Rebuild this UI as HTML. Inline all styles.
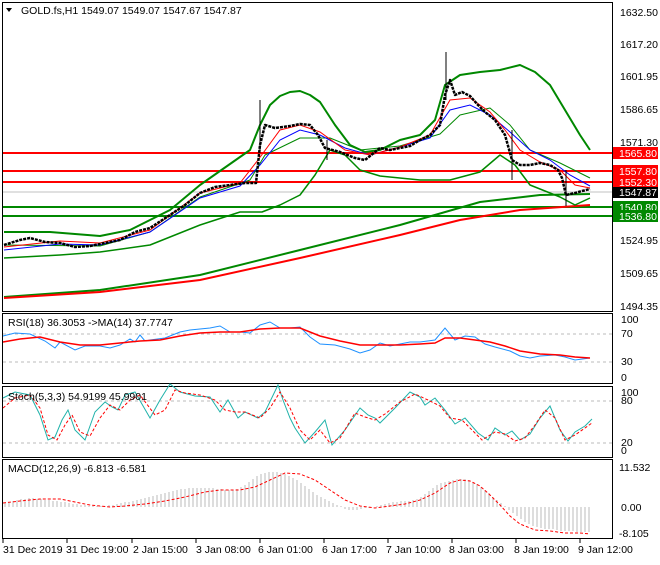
<!DOCTYPE html>
<html><head><meta charset="utf-8"><style>
body{margin:0;background:#fff;width:660px;height:560px;overflow:hidden;font-family:"Liberation Sans",sans-serif}
svg text{font-family:"Liberation Sans",sans-serif;font-size:10.5px;fill:#000}
</style></head><body>
<svg width="660" height="560" xmlns="http://www.w3.org/2000/svg">
<rect width="660" height="560" fill="#fff"/>
<g fill="none" stroke="#000" stroke-width="1">
<rect x="2.5" y="2.5" width="610" height="309"/>
<rect x="2.5" y="313.5" width="610" height="70"/>
<rect x="2.5" y="386.5" width="610" height="71"/>
<rect x="2.5" y="459.5" width="610" height="79"/>
</g>
<g font-size="10">
<text x="620" y="16">1632.50</text><text x="620" y="48">1617.20</text>
<text x="620" y="80">1601.95</text><text x="620" y="113">1586.65</text>
<text x="620" y="146">1571.30</text><text x="620" y="244">1524.95</text>
<text x="620" y="277">1509.65</text><text x="620" y="310">1494.35</text>
</g>
<line x1="3" y1="192" x2="612" y2="192" stroke="#c0c0c0"/>
<g stroke="#f00" stroke-width="2">
<line x1="3" y1="153" x2="612" y2="153"/><line x1="3" y1="171" x2="612" y2="171"/>
<line x1="3" y1="182" x2="612" y2="182"/></g>
<g stroke="#080" stroke-width="2">
<line x1="3" y1="207" x2="612" y2="207"/><line x1="3" y1="216" x2="612" y2="216"/></g>
<rect x="613" y="147" width="45" height="12" fill="#f00"/><text x="619" y="157" style="fill:#fff">1565.80</text>
<rect x="613" y="165" width="45" height="12" fill="#f00"/><text x="619" y="175" style="fill:#fff">1557.80</text>
<rect x="613" y="176" width="45" height="12" fill="#f00"/><text x="619" y="186" style="fill:#fff">1552.30</text>
<rect x="613" y="187" width="45" height="11" fill="#000"/><text x="619" y="196" style="fill:#fff">1547.87</text>
<rect x="613" y="201" width="45" height="12" fill="#080"/><text x="619" y="211" style="fill:#fff">1540.80</text>
<rect x="613" y="210" width="45" height="12" fill="#080"/><text x="619" y="220" style="fill:#fff">1536.80</text>
<polyline fill="none" stroke="#080" stroke-width="2" points="4,297 100,290 200,275 300,250 400,225 480,202 540,195 590,194"/>
<polyline fill="none" stroke="#f00" stroke-width="2" points="4,298 100,292 200,280 300,258 400,235 460,220 520,210 590,205"/>
<g fill="none" stroke="#080" stroke-width="2" stroke-linejoin="round">
<polyline points="4,232 50,232 100,236 130,230 170,210 200,185 250,150 260,125 270,105 280,96 290,92 300,91 310,95 320,102 335,125 350,145 365,152 380,150 400,140 420,135 435,120 445,85 460,75 480,72 500,70 520,65 535,72 550,85 565,110 580,135 590,150"/>
<polyline points="4,258 60,255 100,252 150,245 200,225 240,212 262,212 280,205 300,195 315,175 330,150 345,155 360,170 380,176 420,180 450,180 480,172 500,155 515,165 530,185 560,197 575,205 590,198" stroke-width="1.5"/>
<polyline points="4,245 100,246 150,232 200,197 250,180 265,155 300,138 330,138 360,150 400,146 440,134 460,115 490,108 510,125 530,150 560,163 590,178" stroke-width="1"/>
</g>
<polyline fill="none" stroke="#00f" stroke-width="1" points="4,250 60,244 100,245 150,232 200,198 240,186 260,165 280,140 300,130 320,135 345,148 370,155 400,147 430,138 450,110 470,105 490,115 510,132 530,150 550,160 570,175 590,186"/>
<polyline fill="none" stroke="#f00" stroke-width="1" points="4,247 60,241 100,243 150,230 200,193 240,183 258,160 280,130 300,125 320,132 345,150 370,155 400,147 430,135 450,100 470,98 490,112 505,130 520,150 540,162 560,170 575,185 590,188"/>
<g stroke="#000" fill="none" stroke-width="2.5" stroke-linejoin="round" stroke-dasharray="3,1">
<polyline points="4,245 20,240 30,238 45,242 60,243 75,247 90,246 105,243 120,240 135,232 150,228 170,215 185,205 200,193 215,187 230,185 245,183 256,183 260,145 265,125 275,128 290,126 300,124 310,125 318,135 325,148 340,152 355,158 365,160 375,152 380,148 390,150 400,148 410,146 420,140 430,135 440,125 445,95 450,80 455,95 462,92 470,96 478,105 485,112 495,120 505,135 512,160 520,165 530,165 540,163 550,165 558,170 562,178 566,195 575,193 582,191 590,189"/>
</g>
<g stroke="#000" stroke-width="1">
<line x1="260" y1="100" x2="260" y2="150"/><line x1="446" y1="52" x2="446" y2="100"/>
<line x1="512" y1="130" x2="512" y2="180"/><line x1="566" y1="170" x2="566" y2="206"/>
<line x1="327" y1="140" x2="327" y2="160"/>
</g>
<text x="21" y="14">GOLD.fs,H1  1549.07 1549.07 1547.67 1547.87</text>
<polygon points="6,8 12,8 9,12" fill="#000"/>
<g stroke="#bbb" stroke-dasharray="3,3"><line x1="3" y1="334" x2="612" y2="334"/><line x1="3" y1="362" x2="612" y2="362"/>
<line x1="3" y1="401" x2="612" y2="401"/><line x1="3" y1="443" x2="612" y2="443"/></g>
<polyline fill="none" stroke="#1e90ff" points="3,336 15,333 30,334 45,341 55,348 60,342 75,350 85,346 100,346 110,348 120,345 130,339 135,342 140,335 145,341 150,340 165,338 180,332 190,330 200,329 210,328 220,326 230,332 240,332 250,333 260,325 270,322 280,328 290,328 300,327 310,337 320,344 335,345 350,349 360,353 370,350 380,343 390,346 400,344 410,342 420,342 435,340 445,328 455,340 465,336 475,337 485,344 495,347 510,351 520,356 530,358 540,356 555,355 565,357 575,360 590,358"/>
<polyline fill="none" stroke="#f00" stroke-width="1.5" points="3,342 20,339 40,337 60,342 80,345 100,345 120,343 140,341 160,340 180,336 200,333 220,332 240,332 260,329 280,328 300,328 320,336 340,341 360,345 380,345 400,345 420,344 435,343 445,338 460,338 475,340 490,342 505,346 520,351 540,354 560,355 575,357 590,358"/>
<text x="8" y="326" font-size="10">RSI(18) 36.3053  -&gt;MA(14) 37.7747</text>
<g font-size="10"><text x="621" y="323">100</text><text x="621" y="337">70</text><text x="621" y="365">30</text><text x="621" y="381">0</text>
<text x="621" y="396">100</text><text x="621" y="404">80</text><text x="621" y="446">20</text><text x="621" y="454">0</text>
<text x="619" y="471">11.532</text><text x="621" y="511">0.00</text><text x="619" y="537">-8.105</text></g>
<polyline fill="none" stroke="#20b2aa" points="3,398 15,392 30,395 40,415 48,440 55,437 62,420 68,410 75,430 85,440 95,412 105,402 112,407 118,410 125,395 135,392 150,418 160,400 170,384 180,392 195,396 210,397 220,412 228,400 238,418 245,412 258,418 265,412 278,385 283,400 290,418 295,428 305,443 315,432 325,420 332,445 345,430 360,408 368,415 375,418 380,423 395,408 410,392 420,397 425,405 435,398 445,410 455,424 465,418 478,433 488,440 495,428 505,435 512,431 520,440 530,434 540,418 550,406 560,430 568,441 575,432 585,426 592,419"/>
<polyline fill="none" stroke="#f00" stroke-dasharray="3,2" points="3,408 15,398 30,395 40,408 48,435 57,440 65,425 72,415 80,432 90,436 100,418 110,405 120,410 130,400 140,395 155,415 165,410 175,390 185,393 200,395 215,400 225,410 235,412 245,412 260,418 270,408 280,392 290,408 300,430 310,440 320,430 330,443 340,438 355,413 365,417 375,420 385,414 400,402 415,394 428,400 440,406 450,418 462,420 472,430 482,440 495,432 505,434 515,441 525,438 535,425 545,410 555,418 565,440 575,435 585,428 592,423"/>
<text x="8" y="400" font-size="10">Stoch(5,3,3) 54.9199 45.9901</text>
<g stroke="#bbb" stroke-width="1">
<path d="M5,507v-4M9,507v-5M13,507v-6M17,507v-7M21,507v-8M25,507v-8M29,507v-9M33,507v-9M37,507v-8M41,507v-8M45,507v-7M49,507v-7M53,507v-6M57,507v-6M61,507v-5M65,507v-5M69,507v-4M73,507v-3M77,507v-3M81,507v-2M85,507v-2M89,507v-1M93,507v-1M97,507v-1M101,507v-1M105,507v-1M109,507v-2M113,507v-2M117,507v-3M121,507v-4M125,507v-5M129,507v-5M133,507v-6M137,507v-7M141,507v-8M145,507v-9M149,507v-10M153,507v-11M157,507v-12M161,507v-13M165,507v-14M169,507v-15M173,507v-16M177,507v-17M181,507v-18M185,507v-18M189,507v-19M193,507v-19M197,507v-19M201,507v-19M205,507v-19M209,507v-19M213,507v-19M217,507v-18M221,507v-18M225,507v-17M229,507v-17M233,507v-17M237,507v-18M241,507v-20M245,507v-22M249,507v-25M253,507v-28M257,507v-31M261,507v-33M265,507v-34M269,507v-35M273,507v-35M277,507v-35M281,507v-34M285,507v-33M289,507v-31M293,507v-29M297,507v-27M301,507v-24M305,507v-21M309,507v-18M313,507v-15M317,507v-12M321,507v-10M325,507v-8M329,507v-6M333,507v-4M337,507v-2M341,507v-1M345,507v2M349,507v3M353,507v3M357,507v3M361,507v2M365,507v1M369,507v1M373,507v0M377,507v-1M381,507v-2M385,507v-3M389,507v-4M393,507v-5M397,507v-5M401,507v-6M405,507v-6M409,507v-6M413,507v-7M417,507v-8M421,507v-10M425,507v-13M429,507v-16M433,507v-19M437,507v-22M441,507v-24M445,507v-25M449,507v-26M453,507v-27M457,507v-28M461,507v-28M465,507v-28M469,507v-27M473,507v-25M477,507v-23M481,507v-20M485,507v-17M489,507v-14M493,507v-10M497,507v-7M501,507v-4M505,507v-1M509,507v3M513,507v6M517,507v9M521,507v12M525,507v15M529,507v17M533,507v19M537,507v20M541,507v21M545,507v22M549,507v22M553,507v22M557,507v23M561,507v24M565,507v24M569,507v24M573,507v24M577,507v25M581,507v25M585,507v25M589,507v25"/>
</g>
<polyline fill="none" stroke="#f00" stroke-dasharray="3,2" points="3,503 20,501 40,499 60,499 75,502 90,505 110,507 125,506 145,504 165,501 185,497 205,492 220,490 240,490 255,487 270,480 285,473 300,474 315,480 330,490 345,500 360,506 375,508 390,506 405,504 420,500 435,493 450,483 460,480 470,481 480,486 490,495 500,505 510,516 520,524 535,530 550,531 565,533 580,533 590,534"/>
<text x="8" y="472" font-size="10">MACD(12,26,9) -6.813 -6.581</text>
<g stroke="#000"><line x1="3" y1="539" x2="3" y2="543"/><line x1="67" y1="539" x2="67" y2="543"/><line x1="132" y1="539" x2="132" y2="543"/><line x1="196" y1="539" x2="196" y2="543"/><line x1="260" y1="539" x2="260" y2="543"/><line x1="324" y1="539" x2="324" y2="543"/><line x1="388" y1="539" x2="388" y2="543"/><line x1="452" y1="539" x2="452" y2="543"/><line x1="516" y1="539" x2="516" y2="543"/><line x1="580" y1="539" x2="580" y2="543"/></g>
<g font-size="10">
<text x="3" y="553">31 Dec 2019</text><text x="66" y="553">31 Dec 19:00</text><text x="133" y="553">2 Jan 15:00</text>
<text x="196" y="553">3 Jan 08:00</text><text x="258" y="553">6 Jan 01:00</text><text x="322" y="553">6 Jan 17:00</text>
<text x="386" y="553">7 Jan 10:00</text><text x="449" y="553">8 Jan 03:00</text><text x="514" y="553">8 Jan 19:00</text>
<text x="578" y="553">9 Jan 12:00</text></g>
</svg>
</body></html>
